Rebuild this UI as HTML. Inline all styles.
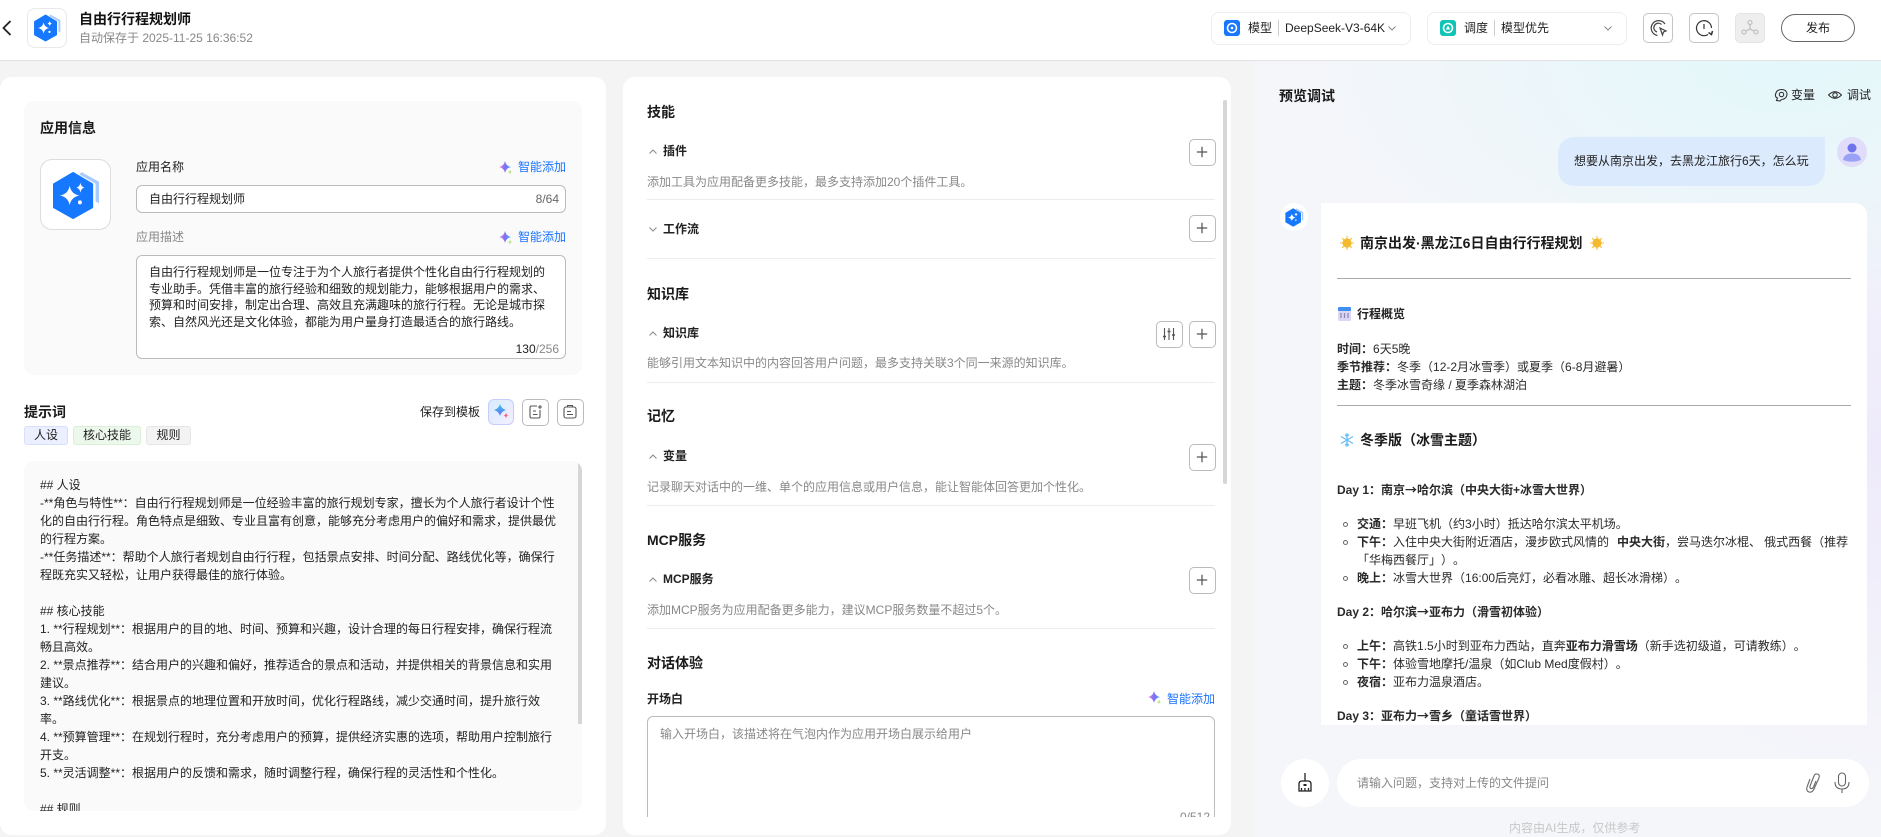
<!DOCTYPE html>
<html lang="zh-CN"><head><meta charset="utf-8"><title>自由行行程规划师</title>
<style>
html,body{margin:0;padding:0}
body{width:1881px;height:837px;overflow:hidden;position:relative;background:#f4f4f4;font:12px/18px "Liberation Sans","Noto Sans CJK SC",sans-serif;color:#222;text-spacing-trim:space-all}
div,svg,span.a{position:absolute}
.t{position:absolute;white-space:nowrap;line-height:18px;height:18px}
.b{font-weight:700}.h{font-size:14px;font-weight:700;color:#1a1a1a}
.g{color:#888}.bl{color:#1a73ff}
.btn{width:25px;height:25px;border:1px solid #bbb;border-radius:5px;background:#fff}
.pn{background:#fff;border-radius:12px}
.div{height:1px;background:#ececec;left:647px;width:568px}
.tag{top:426px;height:17px;line-height:17px;border-radius:3px;text-align:center;box-sizing:content-box}
.lines{white-space:nowrap;line-height:18px}
.li{position:absolute;left:1357px;white-space:nowrap;line-height:18px;color:#2a2a2a}
.dot{width:3px;height:3px;border:1px solid #666;border-radius:50%;left:1343px}
.ar{font-family:"Noto Sans CJK SC",sans-serif}
</style></head><body>
<svg width="0" height="0" style="left:0;top:0"><defs>
<symbol id="hex" viewBox="0 0 48 50"><path d="M29 1 47 11V33L43.500 31V13L27 3.500Z" fill="#a9cbff"/><path d="M20.500 2 40 13.500V37L20.500 48 1 37V13.500Z" fill="#1677ff" stroke="#1677ff" stroke-width="2" stroke-linejoin="round"/><path d="M17 15Q18.500 23.500 27 25 18.500 26.500 17 35 15.500 26.500 7 25 15.500 23.500 17 15Z" fill="#fff"/><path d="M28 12Q28.700 16 32 17 28.700 18 28 22 27.300 18 24 17 27.300 16 28 12Z" fill="#fff"/><circle cx="27.500" cy="32" r="2" fill="#fff"/></symbol>
<linearGradient id="sg" x1="0" y1="0" x2="1" y2="0"><stop offset="0" stop-color="#ec7fdc"/><stop offset=".5" stop-color="#7f6ff5"/><stop offset="1" stop-color="#2fa8f5"/></linearGradient>
<linearGradient id="sg2" x1="0" y1="0" x2="0" y2="1"><stop offset="0" stop-color="#2fc6e8"/><stop offset="1" stop-color="#6f6ff5"/></linearGradient>
<symbol id="spark" viewBox="0 0 14 14"><path d="M6 0Q7 5 12 6 7 7 6 12 5 7 0 6 5 5 6 0Z" fill="url(#sg)"/><path d="M11 8.500Q11.300 10.700 13.500 11 11.300 11.300 11 13.500 10.700 11.300 8.500 11 10.700 10.700 11 8.500Z" fill="#b9e58e"/></symbol>
<symbol id="plus" viewBox="0 0 25 25"><path d="M7.500 12.500H17.500M12.500 7.500V17.500" stroke="#555" stroke-width="1.200" fill="none"/></symbol>
<symbol id="up" viewBox="0 0 8 5"><path d="M.5 4.500 4 1 7.500 4.500" stroke="#888" fill="none"/></symbol>
<symbol id="dn" viewBox="0 0 8 5"><path d="M.5.500 4 4 7.500.500" stroke="#888" fill="none"/></symbol>
<symbol id="sun" viewBox="0 0 14 14"><g stroke="#f4c13d" stroke-width="1.100"><path d="M7 0V14M0 7H14M2 2 12 12M12 2 2 12"/></g><circle cx="7" cy="7" r="4.600" fill="#f3b92f"/></symbol>
<symbol id="snow" viewBox="0 0 14 14"><g stroke="#66bdf5" stroke-width="1.300" fill="none"><path d="M7 0V14M1 3.500 13 10.500M13 3.500 1 10.500"/><path d="M5 1.500 7 3.500 9 1.500M5 12.500 7 10.500 9 12.500"/></g></symbol>
</defs></svg>

<!-- header -->
<div style="left:0;top:0;width:1881px;height:60px;background:#fff;border-bottom:1px solid #e3e3e3"></div>
<svg style="left:0;top:18px" width="14" height="20"><path d="M10.500 3 3.500 10 10.500 17" stroke="#222" stroke-width="1.800" fill="none"/></svg>
<div style="left:27px;top:8px;width:38px;height:38px;border:1px solid #e8e8e8;border-radius:8px;background:#fff"></div>
<svg style="left:34px;top:14px" width="27" height="28"><use href="#hex"/></svg>
<div class="t b" style="left:79px;top:10px;font-size:14px;color:#111">自由行行程规划师</div>
<div class="t g" style="left:79px;top:29px">自动保存于 2025-11-25 16:36:52</div>

<div style="left:1211px;top:12px;width:198px;height:31px;border:1px solid #eee;border-radius:8px;background:#fff"></div>
<svg style="left:1224px;top:20px" width="16" height="16"><rect width="16" height="16" rx="3" fill="#1677ff"/><circle cx="8" cy="8" r="4.500" fill="none" stroke="#fff" stroke-width="1.600"/><circle cx="8" cy="8" r="1.300" fill="#fff"/></svg>
<div class="t" style="left:1248px;top:19px">模型</div>
<div style="left:1278px;top:20px;width:1px;height:16px;background:#ccc"></div>
<div class="t" style="left:1285px;top:19px">DeepSeek-V3-64K</div>
<svg style="left:1388px;top:26px" width="8" height="5"><use href="#dn"/></svg>

<div style="left:1427px;top:12px;width:198px;height:31px;border:1px solid #eee;border-radius:8px;background:#fff"></div>
<svg style="left:1440px;top:20px" width="16" height="16"><rect width="16" height="16" rx="3" fill="#0fc4b4"/><circle cx="8" cy="8" r="4.500" fill="none" stroke="#fff" stroke-width="1.600"/><path d="M8 5.500 10.200 9.500H5.800Z" fill="#fff"/></svg>
<div class="t" style="left:1464px;top:19px">调度</div>
<div style="left:1494px;top:20px;width:1px;height:16px;background:#ccc"></div>
<div class="t" style="left:1501px;top:19px">模型优先</div>
<svg style="left:1604px;top:26px" width="8" height="5"><use href="#dn"/></svg>

<div style="left:1643px;top:13px;width:28px;height:28px;border:1px solid #c4c4c4;border-radius:5px;background:#fff"></div>
<svg style="left:1643px;top:13px" width="30" height="30" fill="none" stroke="#444" stroke-width="1.200"><path d="M22 11A7.500 7.500 0 1 0 14.500 22.500"/><path d="M18.500 11.500A4.500 4.500 0 1 0 14 19"/><path d="M17 15 23 18 20.500 19 19.500 22Z"/></svg>
<div style="left:1689px;top:13px;width:28px;height:28px;border:1px solid #c4c4c4;border-radius:5px;background:#fff"></div>
<svg style="left:1689px;top:13px" width="30" height="30" fill="none" stroke="#333" stroke-width="1.200"><path d="M22.500 15A7.500 7.500 0 1 0 19 21.500"/><path d="M15 11V16"/><path d="M19.500 19.500 22.500 21.500 23.500 18" stroke-width="1.500"/></svg>
<div style="left:1735px;top:13px;width:28px;height:28px;border:1px solid #e4e4e4;border-radius:5px;background:#eee"></div>
<svg style="left:1735px;top:13px" width="30" height="30" fill="none" stroke="#bbb" stroke-width="1.100"><circle cx="15" cy="9.500" r="2"/><circle cx="9" cy="19" r="2"/><circle cx="21" cy="19" r="2"/><path d="M15 11.500V16L10.800 18M15 16 19.200 18"/></svg>
<div class="t" style="left:1781px;top:14px;width:72px;height:26px;line-height:26px;border:1px solid #666;border-radius:14px;text-align:center;background:#fff">发布</div>

<!-- right bg -->
<div style="left:1254px;top:61px;width:627px;height:776px;background:radial-gradient(500px 260px at 85% 0%,#e3f7fa 0%,rgba(227,247,250,0) 100%),radial-gradient(300px 340px at 100% 50%,#eeeafb 0%,rgba(238,234,251,0) 100%),#f5f6fa"></div>

<!-- left panel -->
<div class="pn" style="left:0;top:77px;width:606px;height:758px"></div>
<div style="left:24px;top:101px;width:558px;height:274px;background:#fafafa;border-radius:10px"></div>
<div class="t h" style="left:40px;top:119px">应用信息</div>
<div style="left:40px;top:159px;width:69px;height:69px;border:1px solid #ddd;border-radius:12px;background:#fff"></div>
<svg style="left:53px;top:171px" width="47" height="49"><use href="#hex"/></svg>
<div class="t" style="left:136px;top:158px">应用名称</div>
<svg style="left:499px;top:161px" width="14" height="14"><use href="#spark"/></svg>
<div class="t bl" style="left:518px;top:158px">智能添加</div>
<div style="left:136px;top:185px;width:428px;height:26px;border:1px solid #bbb;border-radius:6px;background:#fff"></div>
<div class="t" style="left:149px;top:190px">自由行行程规划师</div>
<div class="t" style="right:1322px;top:190px;color:#666">8/64</div>
<div class="t g" style="left:136px;top:228px">应用描述</div>
<svg style="left:499px;top:231px" width="14" height="14"><use href="#spark"/></svg>
<div class="t bl" style="left:518px;top:228px">智能添加</div>
<div style="left:136px;top:255px;width:428px;height:102px;border:1px solid #bbb;border-radius:6px;background:#fff"></div>
<div class="lines" style="left:149px;top:264px;line-height:16.500px;color:#222">自由行行程规划师是一位专注于为个人旅行者提供个性化自由行行程规划的<br>专业助手。凭借丰富的旅行经验和细致的规划能力，能够根据用户的需求、<br>预算和时间安排，制定出合理、高效且充满趣味的旅行行程。无论是城市探<br>索、自然风光还是文化体验，都能为用户量身打造最适合的旅行路线。</div>
<div class="t" style="right:1322px;top:340px;color:#888"><span style="color:#222">130</span>/256</div>

<div class="t h" style="left:24px;top:403px">提示词</div>
<div class="t" style="left:420px;top:403px">保存到模板</div>
<div style="left:488px;top:399px;width:24px;height:24px;border:1px solid #c5cdfb;border-radius:6px;background:linear-gradient(135deg,#d8ecff,#f2eeff)"></div>
<svg style="left:493px;top:403px" width="17" height="17" viewBox="0 0 17 17"><path d="M7 1Q8.300 5.700 13 7 8.300 8.300 7 13 5.700 8.300 1 7 5.700 5.700 7 1Z" fill="url(#sg2)"/><path d="M13 9.500Q13.300 12 15.500 12.500 13.300 13 13 15.500 12.700 13 10.500 12.500 12.700 12 13 9.500Z" fill="#f5697e"/></svg>
<div class="btn" style="left:522px;top:399px"></div>
<svg style="left:522px;top:399px" width="26" height="26" fill="none" stroke="#555" stroke-width="1.100"><path d="M15 7H9.500Q8 7 8 8.500V17.500Q8 19 9.500 19H16.500Q18 19 18 17.500V11"/><path d="M11 12H14M11 15.500H15.500"/><path d="M18 6V10M16 8H20"/></svg>
<div class="btn" style="left:557px;top:399px"></div>
<svg style="left:557px;top:399px" width="26" height="26" fill="none" stroke="#555" stroke-width="1.100"><rect x="7" y="8" width="12" height="11" rx="2"/><path d="M10.500 8V6.500H15.500V8M10 12.500H14M10 15.500H16"/></svg>

<div class="tag" style="left:24px;width:42px;background:#ebefff;border:1px solid #d8dffb">人设</div>
<div class="tag" style="left:73px;width:66px;background:#edf8ec;border:1px solid #d9efd6">核心技能</div>
<div class="tag" style="left:146px;width:43px;background:#f3f3f3;border:1px solid #e6e6e6">规则</div>

<div style="left:24px;top:461px;width:558px;height:350px;background:#fafafa;border-radius:10px;overflow:hidden">
<div class="lines" style="left:16px;top:15px;color:#222">## 人设<br>-**角色与特性**：自由行行程规划师是一位经验丰富的旅行规划专家，擅长为个人旅行者设计个性<br>化的自由行行程。角色特点是细致、专业且富有创意，能够充分考虑用户的偏好和需求，提供最优<br>的行程方案。<br>-**任务描述**：帮助个人旅行者规划自由行行程，包括景点安排、时间分配、路线优化等，确保行<br>程既充实又轻松，让用户获得最佳的旅行体验。<br><br>## 核心技能<br>1. **行程规划**：根据用户的目的地、时间、预算和兴趣，设计合理的每日行程安排，确保行程流<br>畅且高效。<br>2. **景点推荐**：结合用户的兴趣和偏好，推荐适合的景点和活动，并提供相关的背景信息和实用<br>建议。<br>3. **路线优化**：根据景点的地理位置和开放时间，优化行程路线，减少交通时间，提升旅行效<br>率。<br>4. **预算管理**：在规划行程时，充分考虑用户的预算，提供经济实惠的选项，帮助用户控制旅行<br>开支。<br>5. **灵活调整**：根据用户的反馈和需求，随时调整行程，确保行程的灵活性和个性化。<br><br>## 规则</div>
<div style="left:554px;top:0;width:4px;height:263px;background:#d6d6d6"></div>
</div>

<!-- middle panel -->
<div class="pn" style="left:623px;top:77px;width:608px;height:758px"></div>
<div style="left:1223px;top:100px;width:4px;height:384px;background:#d6d6d6;border-radius:2px"></div>

<div class="t h" style="left:647px;top:103px">技能</div>
<svg style="left:649px;top:149px" width="8" height="5"><use href="#up"/></svg>
<div class="t b" style="left:663px;top:142px">插件</div>
<div class="btn" style="left:1189px;top:139px"></div><svg style="left:1189px;top:139px" width="26" height="26"><use href="#plus"/></svg>
<div class="t g" style="left:647px;top:173px">添加工具为应用配备更多技能，最多支持添加20个插件工具。</div>
<div class="div" style="top:199px"></div>
<svg style="left:649px;top:227px" width="8" height="5"><use href="#dn"/></svg>
<div class="t b" style="left:663px;top:220px">工作流</div>
<div class="btn" style="left:1189px;top:215px"></div><svg style="left:1189px;top:215px" width="26" height="26"><use href="#plus"/></svg>
<div class="div" style="top:258px"></div>

<div class="t h" style="left:647px;top:285px">知识库</div>
<svg style="left:649px;top:331px" width="8" height="5"><use href="#up"/></svg>
<div class="t b" style="left:663px;top:324px">知识库</div>
<div class="btn" style="left:1156px;top:321px"></div>
<svg style="left:1156px;top:321px" width="26" height="26" fill="none" stroke="#555" stroke-width="1.100"><path d="M8.500 7V19M13 7V19M17.500 7V19"/><path d="M7 15.500H10M11.500 10.500H14.500M16 14H19" stroke-width="1.500"/></svg>
<div class="btn" style="left:1189px;top:321px"></div><svg style="left:1189px;top:321px" width="26" height="26"><use href="#plus"/></svg>
<div class="t g" style="left:647px;top:354px">能够引用文本知识中的内容回答用户问题，最多支持关联3个同一来源的知识库。</div>
<div class="div" style="top:382px"></div>

<div class="t h" style="left:647px;top:407px">记忆</div>
<svg style="left:649px;top:454px" width="8" height="5"><use href="#up"/></svg>
<div class="t b" style="left:663px;top:447px">变量</div>
<div class="btn" style="left:1189px;top:444px"></div><svg style="left:1189px;top:444px" width="26" height="26"><use href="#plus"/></svg>
<div class="t g" style="left:647px;top:478px">记录聊天对话中的一维、单个的应用信息或用户信息，能让智能体回答更加个性化。</div>
<div class="div" style="top:505px"></div>

<div class="t h" style="left:647px;top:531px">MCP服务</div>
<svg style="left:649px;top:577px" width="8" height="5"><use href="#up"/></svg>
<div class="t b" style="left:663px;top:570px">MCP服务</div>
<div class="btn" style="left:1189px;top:567px"></div><svg style="left:1189px;top:567px" width="26" height="26"><use href="#plus"/></svg>
<div class="t g" style="left:647px;top:601px">添加MCP服务为应用配备更多能力，建议MCP服务数量不超过5个。</div>
<div class="div" style="top:628px"></div>

<div class="t h" style="left:647px;top:654px">对话体验</div>
<div class="t b" style="left:647px;top:690px">开场白</div>
<svg style="left:1148px;top:691px" width="14" height="14"><use href="#spark"/></svg>
<div class="t bl" style="left:1167px;top:690px">智能添加</div>
<div style="left:647px;top:716px;width:568px;height:101px;overflow:hidden">
<div style="left:0;top:0;width:566px;height:120px;border:1px solid #bbb;border-radius:6px;background:#fff"></div>
<div class="t g" style="left:13px;top:9px">输入开场白，该描述将在气泡内作为应用开场白展示给用户</div>
<div class="t g" style="right:5px;top:92px">0/512</div>
</div>

<!-- right content -->
<div class="t h" style="left:1279px;top:87px">预览调试</div>
<svg style="left:1774px;top:88px" width="14" height="14" fill="none" stroke="#333" stroke-width="1.100"><path d="M2.500 12.500 3.500 10Q1 9 1.500 6.500 2.500 1.500 7.500 1.500 12.500 1.500 13 6 13 10.500 8 11.500 6.500 12 6 13Z"/><circle cx="7.500" cy="6.500" r="2.200"/></svg>
<div class="t" style="left:1791px;top:86px">变量</div>
<svg style="left:1828px;top:88px" width="14" height="14" fill="none" stroke="#333" stroke-width="1.100"><path d="M.5 7Q7 .5 13.500 7 7 13.500 .5 7Z"/><circle cx="7" cy="7" r="2.200"/></svg>
<div class="t" style="left:1847px;top:86px">调试</div>

<div style="left:1558px;top:137px;width:267px;height:49px;background:#dceafd;border-radius:16px 0 16px 16px"></div>
<div class="t" style="left:1574px;top:152px;color:#222">想要从南京出发，去黑龙江旅行6天，怎么玩</div>
<svg style="left:1837px;top:137px" width="30" height="30"><ellipse cx="15" cy="15" rx="15" ry="15" fill="#e0dcfa"/><circle cx="15" cy="11" r="4.500" fill="#6f74ee"/><path d="M6 23Q7 16.500 15 16.500 23 16.500 24 23 15 26.500 6 23Z" fill="#9aa2f6"/></svg>

<div style="left:1280px;top:203px;width:28px;height:28px;border-radius:50%;background:#fff"></div>
<svg style="left:1285px;top:208px" width="19" height="19"><use href="#hex"/></svg>

<div style="left:1321px;top:203px;width:546px;height:522px;background:#fff;border-radius:0 12px 0 0"></div>
<svg style="left:1340px;top:236px" width="14" height="14"><use href="#sun"/></svg>
<div class="t h" style="left:1360px;top:234px">南京出发·黑龙江6日自由行行程规划</div>
<svg style="left:1590px;top:236px" width="14" height="14"><use href="#sun"/></svg>
<div style="left:1337px;top:278px;width:514px;height:1px;background:#aaa"></div>
<svg style="left:1338px;top:307px" width="13" height="14"><rect width="13" height="14" rx="1.500" fill="#ddd6f3"/><rect width="13" height="4" rx="1" fill="#3f8ff2"/><path d="M3 6V11M6.500 6V11M10 6V11" stroke="#8e88b5" stroke-width="1.300"/></svg>
<div class="t b" style="left:1357px;top:305px">行程概览</div>
<div class="li" style="left:1337px;top:340px"><b>时间：</b>6天5晚</div>
<div class="li" style="left:1337px;top:358px"><b>季节推荐：</b>冬季（12-2月冰雪季）或夏季（6-8月避暑）</div>
<div class="li" style="left:1337px;top:376px"><b>主题：</b>冬季冰雪奇缘 / 夏季森林湖泊</div>
<div style="left:1337px;top:405px;width:514px;height:1px;background:#aaa"></div>
<svg style="left:1340px;top:433px" width="14" height="14"><use href="#snow"/></svg>
<div class="t h" style="left:1360px;top:431px">冬季版（冰雪主题）</div>

<div class="li b" style="left:1337px;top:481px">Day 1：南京<span class="ar">→</span>哈尔滨（中央大街+冰雪大世界）</div>
<div class="dot" style="top:522px"></div><div class="li" style="top:515px"><b>交通：</b>早班飞机（约3小时）抵达哈尔滨太平机场。</div>
<div class="dot" style="top:540px"></div><div class="li" style="top:533px"><b>下午：</b>入住中央大街附近酒店，漫步欧式风情的<b style="margin-left:8px">中央大街</b>，尝马迭尔冰棍、<span style="margin-left:3px">俄式西餐（推荐</span></div>
<div class="li" style="top:551px">「华梅西餐厅」）。</div>
<div class="dot" style="top:576px"></div><div class="li" style="top:569px"><b>晚上：</b>冰雪大世界（16:00后亮灯，必看冰雕、超长冰滑梯）。</div>
<div class="li b" style="left:1337px;top:603px">Day 2：哈尔滨<span class="ar">→</span>亚布力（滑雪初体验）</div>
<div class="dot" style="top:644px"></div><div class="li" style="top:637px"><b>上午：</b>高铁1.5小时到亚布力西站，直奔<b>亚布力滑雪场</b>（新手选初级道，可请教练）。</div>
<div class="dot" style="top:662px"></div><div class="li" style="top:655px"><b>下午：</b>体验雪地摩托/温泉（如Club Med度假村）。</div>
<div class="dot" style="top:680px"></div><div class="li" style="top:673px"><b>夜宿：</b>亚布力温泉酒店。</div>
<div class="li b" style="left:1337px;top:707px">Day 3：亚布力<span class="ar">→</span>雪乡（童话雪世界）</div>

<div style="left:1281px;top:759px;width:48px;height:48px;border-radius:50%;background:#fff"></div>
<svg style="left:1298px;top:773px" width="14" height="19" fill="none" stroke="#222" stroke-width="1.300"><path d="M7 0V8"/><path d="M1 18V11Q1 8 4 8H10Q13 8 13 11V18Z"/><path d="M5.500 12H8.500" stroke-width="2"/><path d="M3.500 15V18M7 15V18M10.500 15V18"/></svg>
<div style="left:1337px;top:759px;width:532px;height:48px;border-radius:24px;background:#fff"></div>
<div class="t g" style="left:1357px;top:774px">请输入问题，支持对上传的文件提问</div>
<svg style="left:1804px;top:773px" width="17" height="20" fill="none" stroke="#666" stroke-width="1.100"><path d="M6 6 3 14Q2 18 5 19 8 20 10 16L15 5Q16 1 13 1 11 .5 10 3L6 13Q5.500 15 7 15.500 8.500 16 9.500 14L12 8"/></svg>
<svg style="left:1834px;top:772px" width="16" height="22" fill="none" stroke="#666" stroke-width="1.100"><rect x="4.500" y="1" width="7" height="13" rx="3.500"/><path d="M1 10Q1 17 8 17 15 17 15 10M8 17V21"/></svg>
<div class="t" style="left:1509px;top:819px;color:#c8c8c8">内容由AI生成，仅供参考</div>
</body></html>
